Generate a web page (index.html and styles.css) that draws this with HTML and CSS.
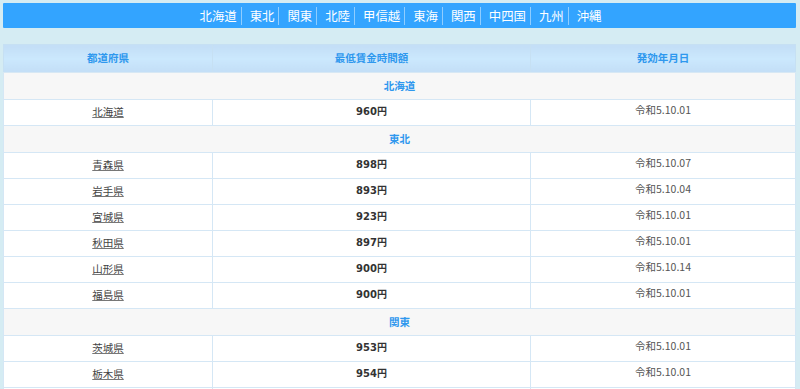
FILE: index.html
```html
<!DOCTYPE html>
<html lang="ja">
<head>
<meta charset="utf-8">
<title>地域別最低賃金</title>
<link rel="stylesheet" href="styles.css">
</head>
<body>
<div class="page">
  <nav class="region-nav">
    <a href="#">北海道</a>
    <a href="#">東北</a>
    <a href="#">関東</a>
    <a href="#">北陸</a>
    <a href="#">甲信越</a>
    <a href="#">東海</a>
    <a href="#">関西</a>
    <a href="#">中四国</a>
    <a href="#">九州</a>
    <a href="#" class="last">沖縄</a>
  </nav>
  <table class="wage-table">
    <thead>
      <tr><th class="c1">都道府県</th><th class="c2">最低賃金時間額</th><th class="c3">発効年月日</th></tr>
    </thead>
    <tbody>
      <tr class="group"><td colspan="3">北海道</td></tr>
      <tr><td><a href="#">北海道</a></td><td class="amount">960円</td><td class="date">令和5.10.01</td></tr>
      <tr class="group"><td colspan="3">東北</td></tr>
      <tr><td><a href="#">青森県</a></td><td class="amount">898円</td><td class="date">令和5.10.07</td></tr>
      <tr><td><a href="#">岩手県</a></td><td class="amount">893円</td><td class="date">令和5.10.04</td></tr>
      <tr><td><a href="#">宮城県</a></td><td class="amount">923円</td><td class="date">令和5.10.01</td></tr>
      <tr><td><a href="#">秋田県</a></td><td class="amount">897円</td><td class="date">令和5.10.01</td></tr>
      <tr><td><a href="#">山形県</a></td><td class="amount">900円</td><td class="date">令和5.10.14</td></tr>
      <tr><td><a href="#">福島県</a></td><td class="amount">900円</td><td class="date">令和5.10.01</td></tr>
      <tr class="group"><td colspan="3">関東</td></tr>
      <tr><td><a href="#">茨城県</a></td><td class="amount">953円</td><td class="date">令和5.10.01</td></tr>
      <tr><td><a href="#">栃木県</a></td><td class="amount">954円</td><td class="date">令和5.10.01</td></tr>
      <tr><td><a href="#">群馬県</a></td><td class="amount">935円</td><td class="date">令和5.10.05</td></tr>
      <tr><td><a href="#">埼玉県</a></td><td class="amount">1028円</td><td class="date">令和5.10.01</td></tr>
    </tbody>
  </table>
</div>
</body>
</html>
```
FILE: styles.css
```css
html, body {
  margin: 0;
  padding: 0;
}
body {
  background: #d5ecf3;
  font-family: "Noto Sans CJK JP", "DejaVu Sans", sans-serif;
  color: #333;
}
.page {
  padding: 3px 4px 0 3px;
}
.region-nav {
  height: 25px;
  background: #33a4ff;
  border-radius: 1px;
  display: flex;
  justify-content: center;
  align-items: center;
  margin-bottom: 16px;
  padding-left: 6px;
}
.region-nav a {
  color: #fff;
  text-decoration: none;
  font-size: 12.4px;
  line-height: 18px;
  padding: 0 4px 0 8px;
  border-right: 1px solid rgba(255,255,255,0.45);
}
.region-nav a:first-child {
  padding-left: 0;
}
.region-nav a.last {
  border-right: none;
}
.wage-table {
  width: 100%;
  border-collapse: collapse;
  background: #fff;
  font-size: 10.5px;
  line-height: 14px;
  table-layout: fixed;
}
.wage-table th {
  height: 28px;
  box-sizing: border-box;
  padding: 0 0 1px;
  background: linear-gradient(#c3def6, #cbe8fd 50%, #c3def6);
  color: #2f98ee;
  font-weight: bold;
  border: 1px solid #c6e0f3;
  border-bottom: 1px solid #d7e8f4;
}
.wage-table .c1 { width: 209px; }
.wage-table .c2 { width: 318px; }
.wage-table td {
  height: 26px;
  box-sizing: border-box;
  padding: 0 0 1px;
  text-align: center;
  vertical-align: middle;
  border: 1px solid #d5e7f5;
  border-top-color: #dfeef9;
}
.wage-table tr.group td {
  height: 27px;
  background: #f7f7f7;
  color: #2f98ee;
  font-weight: bold;
}
.wage-table td a {
  color: #444;
  text-decoration: underline;
  text-decoration-color: #777;
}
.wage-table td.amount {
  font-weight: bold;
  color: #333;
  font-family: "DejaVu Sans", "Noto Sans CJK JP", sans-serif;
  font-size: 10px;
}
.wage-table td.date {
  color: #555;
  padding-bottom: 5px;
}
```
